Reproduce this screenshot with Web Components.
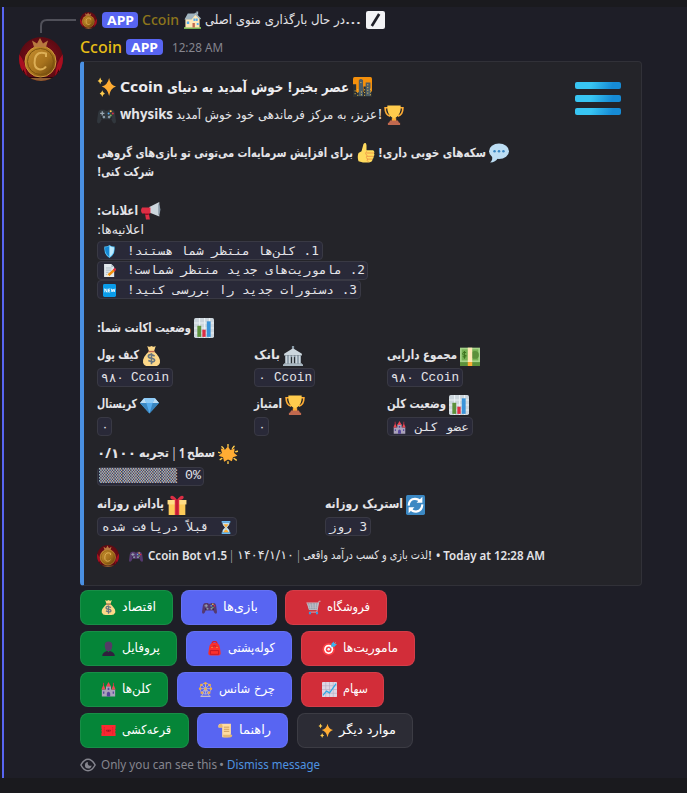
<!DOCTYPE html>
<html lang="fa">
<head>
<meta charset="utf-8">
<title>Ccoin</title>
<style>
html,body{margin:0;background:#1a1a1e;}
body{width:687px;height:793px;overflow:hidden;direction:ltr}
</style>
</head>
<body>
<chat-message></chat-message>
<script>
const sparkle='<path fill="#ffac33" d="M23 2q2 13 13 15q-11 3-13 17q-3-14-14-17q11-2 14-15Z"/><path fill="#ffcc4d" d="M6 1q1 5 5 6q-4 1-5 6q-1-5-5-6q4-1 5-6ZM10 24q1 5 5 6q-4 1-5 6q-1-5-5-6q4-1 5-6Z"/>';
const pad=(a,b)=>`<path fill="${a}" d="M8 7h6l2 2h4l2-2h6q5 0 6 7l2 15q0 4-3 4q-3 0-6-8H9q-3 8-6 8q-3 0-3-4L2 14q1-7 6-7Z"/><path fill="${b}" d="M7 24h7l-2-5H8zM22 24h7l-2-5h-4z" /><path stroke="#9aa7b0" stroke-width="2.4" d="M10 10v8M6 14h8"/><circle cx="26" cy="10" r="1.9" fill="#ffcc4d"/><circle cx="30" cy="14" r="1.9" fill="#dd2e44"/><circle cx="22" cy="14" r="1.9" fill="#55acee"/><circle cx="26" cy="18" r="1.9" fill="#77b255"/><circle cx="13" cy="21" r="2.6" fill="#8899a6"/><circle cx="23" cy="21" r="2.6" fill="#8899a6"/>`;
const coin='<defs><radialGradient id="r"><stop offset="0" stop-color="#8d1020"/><stop offset="1" stop-color="#5c0a12"/></radialGradient><linearGradient id="g" x2="1" y2="1"><stop stop-color="#c99232"/><stop offset=".55" stop-color="#a8731d"/><stop offset="1" stop-color="#5e3b08"/></linearGradient><clipPath id="c"><circle cx="22" cy="22" r="22"/></clipPath></defs><g clip-path="url(#c)"><path fill="url(#r)" d="M0 0h44v44H0z"/><path fill="#a80f20" d="M0 17q7 8 8 23H0zM44 17q-7 8-8 23h8z"/><path fill="#2a0709" d="M4 32l4 8h28l4-8v12H4z"/><path fill="#8e5c32" d="M5 41h34v3H5z"/><circle cx="21.500" cy="24.500" r="15.500" fill="url(#g)" stroke="#d09c3f" stroke-width="1"/><circle cx="21.500" cy="24.500" r="13" fill="none" stroke="#7c520f" stroke-width="1"/><path fill="none" stroke="#dcae55" stroke-width="2" d="M27 20v-3.500q-9-3-11 5q-2 10 5 11q4 0 6-3"/><path fill="#b8793f" d="M15 10L13 3.500l5 3 3-5.500 3 5.500 5-3-2 6.500z"/></g>';
const art={
sparkle,coin:coin,
pad:pad('#31373d','#22272c'),ppad:pad('#553970','#3b2550'),
home:'<path fill="#77b255" d="M0 32h36v4H0z"/><path fill="#ffe8b6" d="M3 15h13v18H3zM15 14L24 5l9 10v18H15z"/><path fill="#a0b4bf" d="M8 5h16l-9 12H1zM24 3l12 12-2 2-10-9-8 9-3-2zM26 1h4v6h-4z"/><path fill="#55acee" d="M20 15h4v5h-4zm5 0h4v5h-4zM6 21h5v5H6zM27 24h4v4h-4z"/><path fill="#c1694f" d="M18 24h5v9h-5z"/>',
slash:'<rect width="36" height="36" rx="4" fill="#f2f2f5"/><path stroke="#1e1e27" stroke-width="5" d="M25 6L11 30"/>',
city:'<rect width="36" height="36" rx="3" fill="#f4900c"/><path fill="#292f33" d="M0 13h6v14h14V17h7v9h9v10H0z"/><path fill="#4b5d68" d="M11 6q4-5 8 0v28h-8zM24 10h9v24h-9z"/><path stroke="#ffcc4d" stroke-width="1.600" stroke-dasharray="2 3" d="M4 24v10M9 22v13M14 10h5M16 26v8M22 22v12M28 13v20M33 21v13"/>',
cup:'<path fill="none" stroke="#ffac33" stroke-width="3" d="M8 5H2q0 13 9 15M28 5h6q0 13-9 15"/><path fill="#ffcc4d" d="M6 1h24q1 16-9 22v6h-6v-6Q5 17 6 1z"/><path fill="#ffac33" d="M14 24h8v5h-8z"/><path fill="#c1694f" d="M11 28h14l2 4h2v4H7v-4h2z"/>',
bubble:'<ellipse cx="18" cy="15" rx="18" ry="14" fill="#bddef4"/><path fill="#bddef4" d="M5 22q3 8-3 13q10 0 14-8z"/><g fill="#3b88c3"><circle cx="10" cy="15" r="2.3"/><circle cx="18" cy="15" r="2.3"/><circle cx="26" cy="15" r="2.3"/></g>',
thumb:'<path fill="#ffdb5e" d="M3 18l6-3 4-13q5-5 6 2v9h13q4 2 2 6 2 3-1 5 1 4-2 5 0 6-7 6H12L3 33q-3-8 0-15z"/><path stroke="#ee9547" stroke-width="1.7" fill="none" d="M19 18h15M20 24h13M20 29h11M19 15q-4 4 1 8q-3 3 1 6q-2 3 2 5"/>',
horn:'<path fill="#ccd6dd" d="M15 10L33 0v29L15 21z"/><path fill="#dd2e44" d="M2 11h15v12H2q-4-6 0-12zM7 22h7l2 13H9z"/><path fill="#8899a6" d="M31 2q8 13 0 26z"/><path fill="#a0041e" d="M7 23h7v3H7z"/>',
shield:'<path fill="#55c7ff" d="M18 0q6 5 14 4q3 22-14 32Q1 26 4 4q8 1 14-4z"/><path fill="#1688d4" d="M18 3v30Q4 23 6 6q7 1 12-3z"/><path fill="#bdeaff" d="M18 3v30Q32 23 30 6q-7 1-12-3z"/>',
note:'<path fill="#e1e8ed" d="M3 0h20l8 8v28H3z"/><path fill="#aab8c2" d="M23 0l8 8h-8z"/><path stroke="#99aab5" stroke-width="2" d="M8 11h16M8 17h15M8 23h8M8 29h14"/><path stroke="#f4900c" stroke-width="7" d="M15 31L31 17"/><path stroke="#dd2e44" stroke-width="7" d="M30 18l5-5"/><path fill="#ffe8b6" d="M10 35l2-8 5 6z"/>',
fresh:'<rect width="36" height="36" rx="4" fill="#0a9cea"/><path fill="none" stroke="#fff" stroke-width="2.400" d="M5 23V13l6 10V13M20 14h-5v8h5M15 18h4M23 13l2 9 3-8 3 8 2-9"/>',
chart:'<rect width="36" height="36" rx="3" fill="#ccd6dd"/><path stroke="#e9f0f4" stroke-width="2" d="M0 9h36M0 18h36M0 27h36M10 0v36M19 0v36M28 0v36"/><path fill="#5c913b" d="M6 14h7v20H6z"/><path fill="#dd2e44" d="M15 21h6v13h-6z"/><path fill="#3b94d9" d="M23 6h7v28h-7z"/>',
bag:'<path fill="#fdd888" d="M13 10h10q13 11 11 20q-2 6-9 6H11q-7 0-9-6Q0 21 13 10z"/><path fill="#fdd888" d="M10 0q4 3 8 0q4 3 8 0l-3 9H13z"/><path stroke="#bf6952" stroke-width="2.500" d="M12 10h12"/><path fill="none" stroke="#67757f" stroke-width="3" d="M24 18q-11-5-12 0q0 4 6 4q6 1 6 4q-1 5-12 0M18 13v20"/>',
bank:'<path fill="#8899a6" d="M16 0h4v5h-4z"/><path fill="#ccd6dd" d="M18 4l16 10v3H2v-3z"/><path fill="#8899a6" d="M4 17h28v14H4z"/><path fill="#292f33" d="M14 20h8v12h-8z"/><path stroke="#ccd6dd" stroke-width="3" d="M6 17v15M12 17v15M18 17v15M24 17v15M30 17v15"/><path fill="#aab8c2" d="M2 31h32v2h2v3H0v-3h2z"/>',
cash:'<path fill="#5c913b" d="M0 6h36v30H0z"/><path fill="#a6d388" d="M0 3h36v26H0z"/><path fill="#77b255" d="M3 6h30v20H3z"/><circle cx="27" cy="16" r="7" fill="#5c913b"/><path fill="none" stroke="#3e721d" stroke-width="1.800" d="M11 12q-5-3-6 1t6 4q0 5-6 2M8 9v14"/><path fill="#ffe8b6" d="M14 3h8v26h-8z"/><path fill="#ffac33" d="M14 29h8v7h-8z"/>',
gem:'<path fill="#55acee" d="M8 4h20l8 10-18 21L0 14z"/><path fill="#bdddf4" d="M8 4l4 10H0zM28 4l8 10H24z"/><path fill="#8ccaf7" d="M8 4h20l-4 10H12z"/><path fill="#269" d="M24 14h12L18 35z" opacity=".55"/><path fill="#3b88c3" d="M0 14h12l6 21z"/>',
sun:'<g stroke="#ffcc4d" stroke-width="2.500" stroke-linecap="round"><path d="M18 1v3M18 32v3M1 15l3 1M32 14l3-1M4 28l3-2M29 26l4 3M7 5l3 3M29 4l-3 4"/></g><path fill="#ffac33" d="M18 4l4 7 8-3-1 8 6 5-8 3-2 7-7-3-7 4-2-8-8-3 6-5-2-8 8 2z"/>',
gift:'<path fill="#fdcb58" d="M3 14h30v22H3z"/><path fill="#ffdd85" d="M1 9h34v8H1z"/><path fill="#dd2e44" d="M14 8h8v28h-8zM18 9Q5 9 6 3q4-5 12 6Q26-2 30 3q1 6-12 6z"/><path fill="#a0041e" d="M16 8h4v28h-4z" opacity=".4"/>',
cycle:'<rect width="36" height="36" rx="3" fill="#3b88c3"/><path fill="none" stroke="#fff" stroke-width="4" d="M5 19Q6 7 17 7q7 0 9 4M31 17q-1 12-12 13q-7 0-10-5"/><path fill="#fff" d="M20 14h11V3zM16 22H5v11z"/>',
castle:'<path fill="#aaa2bb" d="M2 18h32v17H2zM12 10h12v10H12z"/><path fill="#ef4654" d="M1 18L6 6l5 12zM25 18l5-12 5 12zM12 11l6-11 6 11z"/><path fill="#55449a" d="M14 35v-8q4-7 8 0v8zM16 14h4v5h-4zM5 23h3v5H5zM28 23h3v5h-3z"/><path stroke="#dd2e44" stroke-width="2" d="M6 2v6M30 2v6"/>',
hourglass:'<path fill="#64b9f2" d="M5 0h26v5H5zM5 31h26v5H5z"/><path fill="#bce4fa" d="M7 5h22q0 8-8 13q8 6 8 13H7q0-7 8-13Q7 13 7 5z"/><path fill="#ffac33" d="M10 9h16l-8 9zM10 31q8-13 16 0zM17 18h2v9h-2z"/>',
person:'<path fill="#553a66" d="M9 10q0-9 9-9t9 9q0 11-6 14h-6q-6-3-6-14z"/><path fill="#31203e" d="M3 36q0-9 12-12l3 3 3-3q12 3 12 12z"/>',
cart:'<path fill="#8899a6" d="M3 8l27-1-3 17H7z"/><path fill="none" stroke="#c8c3cb" stroke-width="2" d="M1 7h28l-3 16H8L3 8M9 8l3 14M16 8l1 14M23 8l-1 14M5 12h23M6 17h21M35 3h-4L26 29H8"/><path fill="#369ae0" d="M7 29h5v5H7zM24 29h5v5h-5z"/>',
pack:'<path fill="none" stroke="#d51c2b" stroke-width="3" d="M12 7q0-6 6-6t6 6"/><path fill="#fa302d" d="M5 16Q6 4 18 4t13 12l2 14q0 5-6 5H9q-6 0-6-5z"/><path fill="none" stroke="#b91625" stroke-width="2" d="M9 14q9-5 18 0M8 23h20v9H8z"/><path fill="#ffcc4d" d="M11 13h2v4h-2zM23 13h2v4h-2z"/>',
target:'<circle cx="16" cy="20" r="15" fill="#fa4045"/><circle cx="16" cy="20" r="11" fill="#fff"/><circle cx="16" cy="20" r="7" fill="#fa4045"/><circle cx="16" cy="20" r="3" fill="#fff"/><path stroke="#9ad8fa" stroke-width="2" d="M16 20L33 4"/><path fill="#37b5ef" d="M22 13l1-7 6-5v6h7l-6 7z"/>',
wheel:'<g stroke="#c8bdc8" stroke-width="2" fill="none"><circle cx="18" cy="16" r="13"/><path d="M18 3v26M5 16h26M9 7l18 18M27 7L9 25M18 16L8 35M18 16l10 19"/></g><g fill="#f0ac42"><circle cx="18" cy="3" r="3"/><circle cx="31" cy="16" r="3"/><circle cx="5" cy="16" r="3"/><circle cx="8" cy="7" r="3"/><circle cx="28" cy="7" r="3"/><circle cx="9" cy="26" r="3"/><circle cx="27" cy="26" r="3"/><circle cx="18" cy="16" r="3"/></g><path fill="#c8bdc8" d="M6 33h24v3H6z"/>',
graph:'<rect width="36" height="36" rx="2" fill="#ddd6e4"/><path stroke="#b9acc0" stroke-width="1.500" d="M0 9h36M0 18h36M0 27h36M9 0v36M18 0v36M27 0v36"/><path fill="none" stroke="#32a8e4" stroke-width="3" d="M2 32l9-10 7 4L34 4"/>',
ticket:'<path fill="#fa2831" d="M1 5h34v8q-3 1 0 4v3q-3 2 0 4v7H1v-7q3-2 0-4v-3q3-3 0-4z"/><path stroke="#c51a2a" stroke-width="1.500" stroke-dasharray="3 2" d="M8 10v17M28 10v17"/><path fill="#a51227" d="M12 18l3-3v7zM24 18l-3-3v7zM16 16h4v5h-4z"/>',
scroll:'<path fill="#ffdca0" d="M7 2h24v23q-1 9-8 9H10V11H1V6q0-4 6-4z"/><path fill="#e5b873" d="M7 2q5 0 4 9H2q-3-7 5-9zM12 28h22q1 7-6 7H13z"/><path stroke="#c6924d" stroke-width="2" d="M14 10h13M14 15h13M14 20h13"/>',
eye:'<path fill="none" stroke="#85858e" stroke-width="3.400" d="M2 18Q9 5 18 5t16 13Q27 31 18 31T2 18z"/><path fill="#85858e" d="M18 11a7.500 7.500 0 1 0 8 8q-6 2-8-2 -1-3 0-6z"/>'
};

class EmojiIcon extends HTMLElement{
  connectedCallback(){
    const w=this.getAttribute('s')||20,h=this.getAttribute('h')||w,n=this.getAttribute('name');
    const box=n==='coin'?'0 0 44 44':'0 0 36 36';
    this.attachShadow({mode:'open'}).innerHTML=`<style>:host{display:block;flex:none;width:${w}px;height:${h}px;margin-left:${this.getAttribute('g')||0}px}svg{display:block;width:100%;height:100%}</style><svg viewBox="${box}" preserveAspectRatio="none">${art[n]}</svg>`;
  }
}
customElements.define('emoji-icon',EmojiIcon);

/* One run of text, condensed or widened to the advance width given by "w". */
class FitText extends HTMLElement{
  connectedCallback(){
    const w=+this.getAttribute('w'),r=this.hasAttribute('rtl');
    this.attachShadow({mode:'open'}).innerHTML=`<style>:host{display:flex;flex:none;align-items:center;direction:ltr;width:${w}px;height:1.3em;margin-left:${this.getAttribute('g')||0}px}span{display:block;flex:none;width:max-content;white-space:pre;line-height:1.3;transform-origin:0 50%;direction:${r?'rtl':'ltr'}${r?';font-family:var(--fa,"DejaVu Sans"),sans-serif;font-size:var(--fs,.93em)':''}}</style><span><slot></slot></span>`;
    const s=this.shadowRoot.querySelector('span');
    s.style.transform=`scaleX(${w/s.getBoundingClientRect().width})`;
  }
}

class TextRow extends HTMLElement{
  constructor(){super();this.attachShadow({mode:'open'}).innerHTML='<style>:host{display:flex;align-items:center;flex:none;height:20px}:host([bold]){font-weight:700}</style><slot></slot>';}
}
customElements.define('text-row',TextRow);

class CodeChip extends HTMLElement{
  connectedCallback(){
    this.attachShadow({mode:'open'}).innerHTML=`<style>:host{display:flex;align-items:center;flex:none;box-sizing:border-box;width:${this.getAttribute('w')}px;height:19px;border:1px solid #393944;border-radius:4px;background:#292938;font:400 12.500px "Liberation Mono","DejaVu Sans Mono",monospace;--fa:"DejaVu Sans Mono";--fs:1em;color:#e4e4e8;padding-top:1px}:host([fa]){font-family:"DejaVu Sans Mono",monospace;font-size:11.500px}</style><slot></slot>`;
  }
}
customElements.define('code-chip',CodeChip);

class AppBadge extends HTMLElement{
  constructor(){super();this.attachShadow({mode:'open'}).innerHTML='<style>:host{display:flex;align-items:center;justify-content:center;flex:none;width:36px;height:16px;border-radius:4px;background:#5865f2;color:#fff;font-weight:700;font-size:13px}</style><slot></slot>';}
}
customElements.define('app-badge',AppBadge);

class EmbedField extends HTMLElement{
  connectedCallback(){this.attachShadow({mode:'open'}).innerHTML=`<style>:host{display:flex;flex-direction:column;gap:2px;flex:none;width:${this.getAttribute('w')}px}.l{display:flex;align-items:center;height:21px;gap:${this.getAttribute('lg')||3}px;font-weight:700}</style><div class="l"><slot name="label"></slot></div><slot></slot>`;}
}
customElements.define('embed-field',EmbedField);

class ActionButton extends HTMLElement{
  connectedCallback(){
    const c={green:'#058538',blue:'#5865f2',red:'#d22d39',grey:'#2c2c35'}[this.getAttribute('tone')];
    this.attachShadow({mode:'open'}).innerHTML=`<style>:host{box-sizing:border-box;display:flex;align-items:center;flex:none;width:${this.getAttribute('w')}px;height:35px;padding-left:20px;border:1px solid rgba(255,255,255,.08);border-radius:8px;background:${c};color:#fff;gap:6px;font-size:13.500px}</style><emoji-icon name="${this.getAttribute('icon')}" s="15"></emoji-icon><slot></slot>`;
  }
}
customElements.define('action-button',ActionButton);

class MenuEmbed extends HTMLElement{
  constructor(){super();this.attachShadow({mode:'open'}).innerHTML=`<style>
:host{display:block;box-sizing:border-box;width:562px;height:525px;border:1px solid #313138;border-left:4px solid #4a90e2;border-radius:4px;background:#242429;padding:14px 20px 0 13px;color:#e4e4e8}
.top{display:flex;justify-content:space-between;height:61px}
.menu{display:flex;flex-direction:column;gap:6px;padding-top:6px}.menu i{display:block;width:46px;height:7px;border-radius:2px;background:linear-gradient(110deg,#38c5f2 35%,#168bd5 80%)}
.title{font-size:15px;height:22px;color:#ededf0}
.codes{display:flex;flex-direction:column;gap:.5px;padding-top:1px;margin-bottom:1px}
.fields{display:flex;height:49px}
.foot{font-size:12px;height:22px;padding-top:8px}
</style>
<div class="top"><div>
<text-row bold class="title"><emoji-icon name="sparkle" s="19" h="20"></emoji-icon><fit-text w="43" g="4">Ccoin</fit-text><fit-text rtl w="182" g="4">عصر بخیر! خوش آمدید به دنیای</fit-text><emoji-icon name="city" g="4" s="19" h="20"></emoji-icon></text-row>
<text-row style="margin-top:7px"><emoji-icon name="pad" s="19"></emoji-icon><fit-text w="53" g="4" style="font-weight:700">whysiks</fit-text><fit-text rtl w="201" g="3">عزیز، به مرکز فرماندهی خود خوش آمدید</fit-text><fit-text w="4" g="1">!</fit-text><emoji-icon name="cup" g="2"></emoji-icon></text-row>
</div><div class="menu"><i></i><i></i><i></i></div></div>
<text-row bold style="margin-top:6px"><fit-text rtl w="256">برای افزایش سرمایه‌ات می‌تونی تو بازی‌های گروهی</fit-text><emoji-icon name="thumb" g="4" s="18" h="20"></emoji-icon><fit-text rtl w="108" g="3">سکه‌های خوبی داری!</fit-text><emoji-icon name="bubble" g="3"></emoji-icon></text-row>
<text-row bold style="height:19px"><fit-text rtl w="57">شرکت کنی!</fit-text></text-row>
<text-row bold style="margin-top:19px"><fit-text rtl w="41">اعلانات:</fit-text><emoji-icon name="horn" g="3" h="18"></emoji-icon></text-row>
<text-row style="height:19px"><fit-text rtl w="47">اعلانیه‌ها:</fit-text></text-row>
<div class="codes">
<code-chip fa w="226"><emoji-icon name="shield" g="5" s="13"></emoji-icon><fit-text rtl w="192" g="11">1. کلن‌ها منتظر شما هستند!</fit-text></code-chip>
<code-chip fa w="271"><emoji-icon name="note" g="5" s="13"></emoji-icon><fit-text rtl w="238" g="11">2. ماموریت‌های جدید منتظر شماست!</fit-text></code-chip>
<code-chip fa w="264"><emoji-icon name="fresh" g="5" s="13"></emoji-icon><fit-text rtl w="230" g="11">3. دستورات جدید را بررسی کنید!</fit-text></code-chip>
</div>
<text-row bold style="margin-top:19px"><fit-text rtl w="94">وضعیت اکانت شما:</fit-text><emoji-icon name="chart" g="3" s="20"></emoji-icon></text-row>
<div class="fields" style="margin-top:7px">
<embed-field w="157"><fit-text slot="label" rtl w="42">کیف پول</fit-text><emoji-icon slot="label" name="bag" s="19" h="20"></emoji-icon><code-chip w="76"><fit-text w="23" g="3" style="font-family:'DejaVu Sans Mono'">۹۸۰</fit-text><fit-text w="38" g="7">Ccoin</fit-text></code-chip></embed-field>
<embed-field w="133"><fit-text slot="label" rtl w="26">بانک</fit-text><emoji-icon slot="label" name="bank" s="20"></emoji-icon><code-chip w="61"><fit-text w="8" g="3" style="font-family:'DejaVu Sans Mono'">۰</fit-text><fit-text w="38" g="8">Ccoin</fit-text></code-chip></embed-field>
<embed-field w="120"><fit-text slot="label" rtl w="70">مجموع دارایی</fit-text><emoji-icon slot="label" name="cash" s="20"></emoji-icon><code-chip w="76"><fit-text w="23" g="3" style="font-family:'DejaVu Sans Mono'">۹۸۰</fit-text><fit-text w="38" g="7">Ccoin</fit-text></code-chip></embed-field>
</div>
<div class="fields">
<embed-field w="157"><fit-text slot="label" rtl w="40">کریستال</fit-text><emoji-icon slot="label" name="gem" s="19" h="18"></emoji-icon><code-chip fa w="15"><fit-text w="8" g="3">۰</fit-text></code-chip></embed-field>
<embed-field w="133"><fit-text slot="label" rtl w="28">امتیاز</fit-text><emoji-icon slot="label" name="cup"></emoji-icon><code-chip fa w="15"><fit-text w="8" g="3">۰</fit-text></code-chip></embed-field>
<embed-field w="120"><fit-text slot="label" rtl w="59">وضعیت کلن</fit-text><emoji-icon slot="label" name="chart"></emoji-icon><code-chip fa w="86"><emoji-icon name="castle" g="5" s="13"></emoji-icon><fit-text rtl w="54" g="9">عضو کلن</fit-text></code-chip></embed-field>
</div>
<div class="fields" style="height:51px"><embed-field w="200" lg="2.5"><fit-text slot="label" w="39">۰/۱۰۰</fit-text><fit-text slot="label" rtl w="30">تجربه</fit-text><fit-text slot="label" w="4" g="1">|</fit-text><fit-text slot="label" w="6">1</fit-text><fit-text slot="label" rtl w="28">سطح</fit-text><emoji-icon slot="label" name="sun"></emoji-icon><code-chip w="107" style="margin-top:1px;padding-top:0"><fit-text w="78" g="1" style="font-family:'DejaVu Sans Mono';font-size:13px;color:#c4c4cc">▒▒▒▒▒▒▒▒▒▒</fit-text><fit-text w="16" g="8">0%</fit-text></code-chip></embed-field></div>
<div class="fields" style="height:43px">
<embed-field w="228"><fit-text slot="label" rtl w="67">پاداش روزانه</fit-text><emoji-icon slot="label" name="gift"></emoji-icon><code-chip fa w="140"><fit-text rtl w="107" g="4">قبلاً دریافت شده</fit-text><emoji-icon name="hourglass" g="11" s="12" h="13"></emoji-icon></code-chip></embed-field>
<embed-field w="120"><fit-text slot="label" rtl w="78">استریک روزانه</fit-text><emoji-icon slot="label" name="cycle" s="19" h="20"></emoji-icon><code-chip fa w="46"><fit-text rtl w="38" g="3">3 روز</fit-text></code-chip></embed-field>
</div>
<text-row class="foot"><emoji-icon name="coin" s="22"></emoji-icon><emoji-icon name="ppad" g="10" s="14"></emoji-icon><fit-text w="79" g="5" style="font-weight:600">Ccoin Bot v1.5</fit-text><fit-text w="3" g="3">|</fit-text><fit-text w="57" g="4" style="font-family:'DejaVu Sans'">۱۴۰۴/۱/۱۰</fit-text><fit-text w="3" g="3">|</fit-text><fit-text rtl w="125" g="3" style="--fs:12px">لذت بازی و کسب درآمد واقعی</fit-text><fit-text w="4">!</fit-text><fit-text w="109" g="4" style="font-weight:600">• Today at 12:28 AM</fit-text></text-row>`;}
}
customElements.define('menu-embed',MenuEmbed);

class ChatMessage extends HTMLElement{
  constructor(){super();this.attachShadow({mode:'open'}).innerHTML=`<style>
:host{display:block;box-sizing:border-box;margin:7px 0 0 2px;width:685px;height:771px;border-left:2px solid #5865f2;background:#1e1e27;padding-left:15px;font:400 13.500px "Noto Sans","DejaVu Sans",sans-serif;color:#e4e4e8}
.body{display:flex}.side{width:61px;flex:none;height:74px}.spine{display:block;margin-left:21px;width:38px;height:30px}
.reply{height:26px}.name{height:28px}
.buttons{display:flex;flex-direction:column;gap:6px;margin-top:4px}.r{display:flex;gap:8px}.r.m{gap:9px}
.hint{font-size:12px;height:18px;margin-top:8px;color:#85858e}
</style>
<div class="body"><div class="side"><svg class="spine" viewBox="0 0 38 30"><path d="M1 26V19Q1 13 7 13H36" fill="none" stroke="#505059" stroke-width="2"/></svg><emoji-icon name="coin" s="44"></emoji-icon></div>
<div>
<text-row class="reply"><emoji-icon name="coin" s="17"></emoji-icon><app-badge style="margin-left:5px"><fit-text w="27">APP</fit-text></app-badge><fit-text w="37" g="4" style="font-size:14px;color:#8d751c;font-weight:500">Ccoin</fit-text><emoji-icon name="home" g="5" s="17" h="18"></emoji-icon><fit-text rtl w="140" g="4">در حال بارگذاری منوی اصلی</fit-text><fit-text w="16">...</fit-text><emoji-icon name="slash" g="5" s="19" h="18"></emoji-icon></text-row>
<text-row class="name"><fit-text w="42" style="font-size:16px;color:#e6bd16;font-weight:500">Ccoin</fit-text><app-badge style="margin-left:4px;width:37px"><fit-text w="27">APP</fit-text></app-badge><fit-text w="51" g="9" style="font-size:12px;color:#85858e;margin-top:2px">12:28 AM</fit-text></text-row>
<menu-embed></menu-embed>
<div class="buttons">
<div class="r"><action-button tone="green" icon="bag" w="93"><fit-text rtl w="34">اقتصاد</fit-text></action-button><action-button tone="blue" icon="ppad" w="96"><fit-text rtl w="35">بازی‌ها</fit-text></action-button><action-button tone="red" icon="cart" w="102"><fit-text rtl w="43">فروشگاه</fit-text></action-button></div>
<div class="r m"><action-button tone="green" icon="person" w="97"><fit-text rtl w="38">پروفایل</fit-text></action-button><action-button tone="blue" icon="pack" w="106"><fit-text rtl w="47">کوله‌پشتی</fit-text></action-button><action-button tone="red" icon="target" w="114"><fit-text rtl w="55">ماموریت‌ها</fit-text></action-button></div>
<div class="r m"><action-button tone="green" icon="castle" w="88"><fit-text rtl w="29">کلن‌ها</fit-text></action-button><action-button tone="blue" icon="wheel" w="115"><fit-text rtl w="56">چرخ شانس</fit-text></action-button><action-button tone="red" icon="graph" w="83"><fit-text rtl w="25">سهام</fit-text></action-button></div>
<div class="r"><action-button tone="green" icon="ticket" w="109"><fit-text rtl w="49">قرعه‌کشی</fit-text></action-button><action-button tone="blue" icon="scroll" w="91"><fit-text rtl w="32">راهنما</fit-text></action-button><action-button tone="grey" icon="sparkle" w="116" style="margin-left:1px"><fit-text rtl w="57">موارد دیگر</fit-text></action-button></div>
</div>
<text-row class="hint"><emoji-icon name="eye" s="16"></emoji-icon><fit-text w="116" g="5">Only you can see this</fit-text><fit-text w="5" g="2">•</fit-text><fit-text w="93" g="3" style="color:#4e93e0">Dismiss message</fit-text></text-row>
</div></div>`;}
}
customElements.define('chat-message',ChatMessage);
/* Registered last, so every run is measured inside the finished tree. */
customElements.define('fit-text',FitText);
</script>
</body>
</html>
